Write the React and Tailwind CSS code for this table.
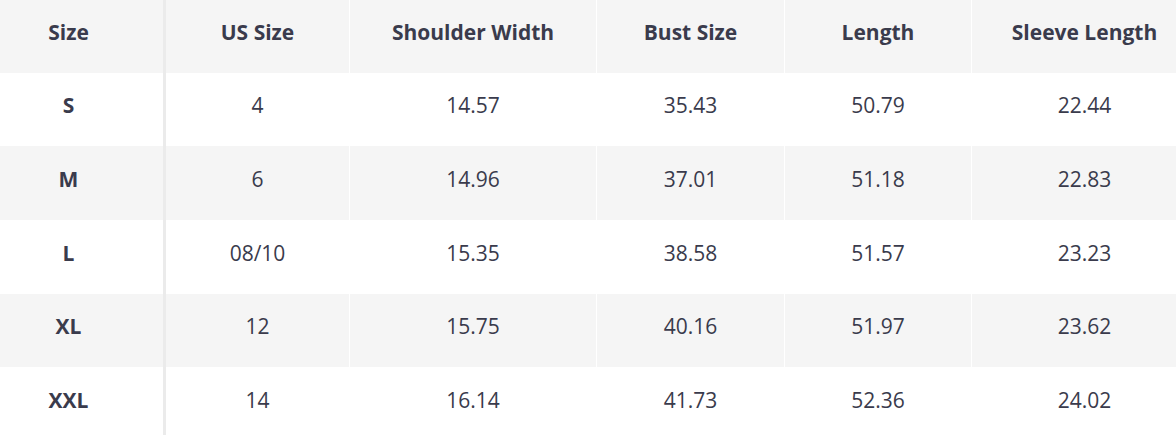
import React from "react";

const headers = ["Size", "US Size", "Shoulder Width", "Bust Size", "Length", "Sleeve Length"];
const rows = [
  ["S", "4", "14.57", "35.43", "50.79", "22.44"],
  ["M", "6", "14.96", "37.01", "51.18", "22.83"],
  ["L", "08/10", "15.35", "38.58", "51.57", "23.23"],
  ["XL", "12", "15.75", "40.16", "51.97", "23.62"],
  ["XXL", "14", "16.14", "41.73", "52.36", "24.02"],
];
const widths = ["w-[184px]", "w-[247px]", "w-[188px]", "w-[187px]", "w-[226px]"];
const heights = ["h-[73px]", "h-[73px]", "h-[74px]", "h-[74px]", "h-[73px]", "h-[74px]"];

function Row({ cells, header, gray, h }) {
  const bg = gray ? "bg-[#f5f5f5]" : "bg-white";
  return (
    <div className={`flex shrink-0 ${h} ${bg}`}>
      <div className="w-[163px] shrink-0 pr-[26px] pb-[7px] flex items-center justify-center font-bold text-[21px]">
        {cells[0]}
      </div>
      <div className="w-[3px] shrink-0 bg-[#ebebeb]" />
      {cells.slice(1).map((c, i) => (
        <div
          key={i}
          className={`${widths[i]} shrink-0 pb-[7px] flex items-center justify-center border-r border-white text-[21px] ${
            header ? "font-bold" : ""
          }`}
        >
          {c}
        </div>
      ))}
    </div>
  );
}

export default function App() {
  return (
    <div
      className="w-[1176px] h-[435px] overflow-hidden bg-white text-[#3a3b4c]"
      style={{ fontFamily: "'Open Sans', sans-serif" }}
    >
      <div className="w-[1250px] flex flex-col">
        <Row cells={headers} header gray h={heights[0]} />
        {rows.map((r, i) => (
          <Row key={i} cells={r} gray={i % 2 === 1} h={heights[i + 1]} />
        ))}
      </div>
    </div>
  );
}
